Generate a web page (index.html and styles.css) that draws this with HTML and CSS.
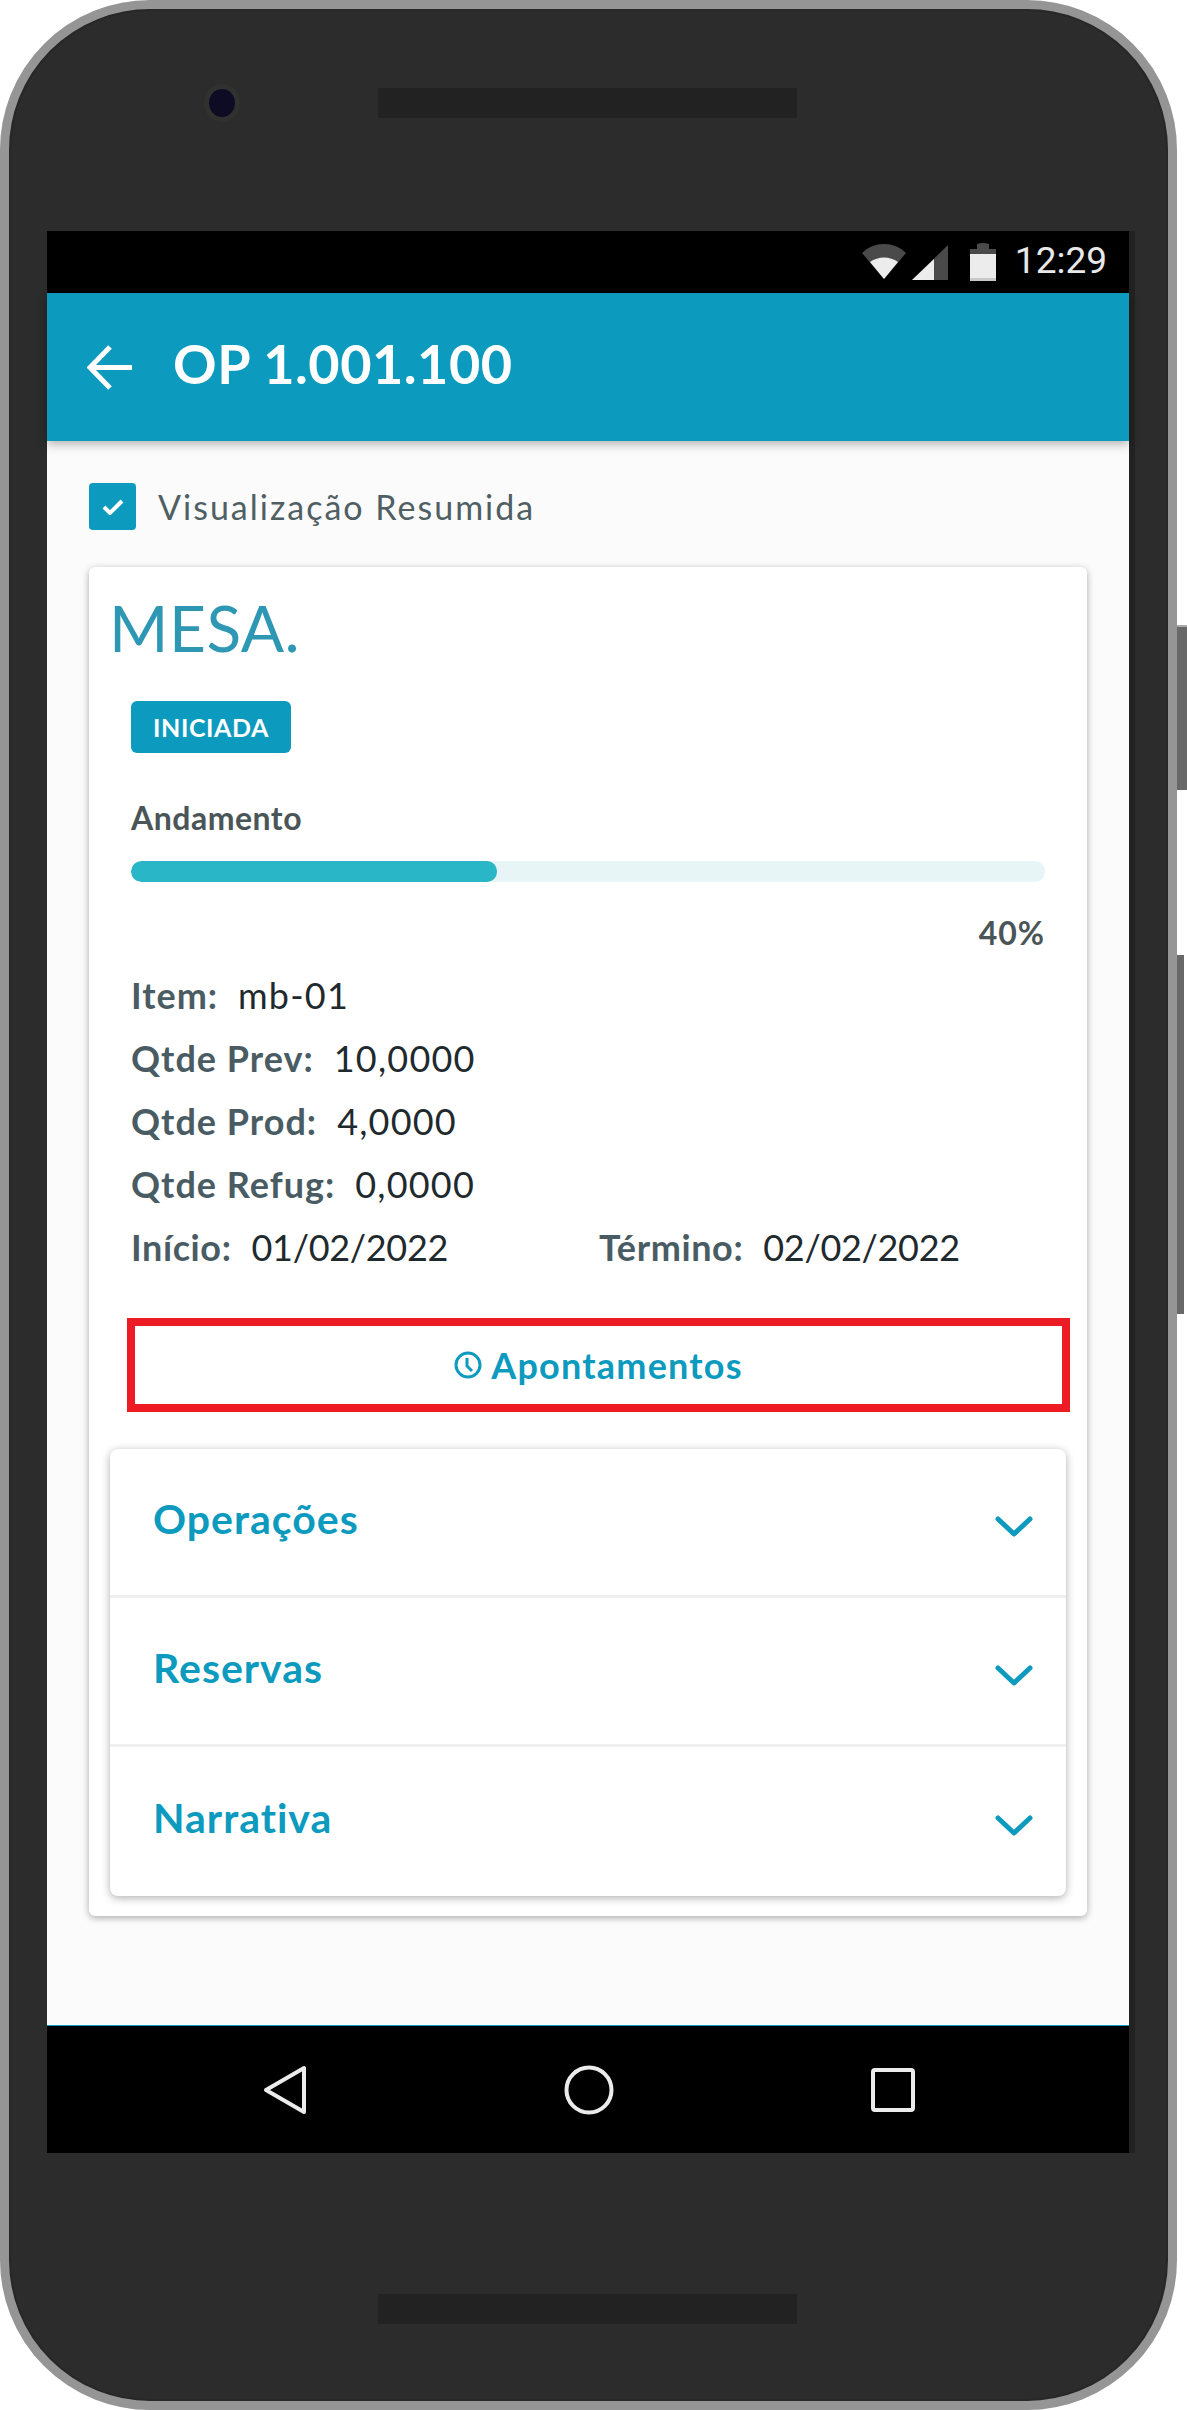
FILE: index.html
```html
<!DOCTYPE html>
<html lang="pt-BR">
<head>
    <meta charset="UTF-8">
    <title>OP 1.001.100</title>
    <link rel="stylesheet" href="styles.css">
</head>
<body>
    <div class="phone">
        <div class="side-key side-key-power"></div>
        <div class="side-key side-key-volume"></div>

        <div class="phone-top">
            <div class="camera"></div>
            <div class="speaker"></div>
        </div>

        <div class="screen">
            <div class="status-bar">
                <svg class="status-wifi" width="44" height="35" viewBox="0 0 44 35">
                    <path d="M0 9 C12 -3 32 -3 44 9 L22 35 Z" fill="#4a4a4a"/>
                    <path d="M8 18 C16 12 28 12 36 18 L22 35 Z" fill="#ececec"/>
                </svg>
                <svg class="status-signal" width="36" height="35" viewBox="0 0 36 35">
                    <path d="M36 0 L36 35 L0 35 Z" fill="#4a4a4a"/>
                    <path d="M22 14 L22 35 L0 35 Z" fill="#ececec"/>
                </svg>
                <svg class="status-battery" width="26" height="38" viewBox="0 0 26 38">
                    <path d="M0 6 L7 6 L7 1 Q13 -1 19 1 L19 6 L26 6 L26 38 L0 38 Z" fill="#4a4a4a"/>
                    <rect x="0" y="11" width="26" height="24" fill="#ececec"/>
                    <rect x="0" y="35" width="26" height="3" fill="#c8c8c8"/>
                </svg>
                <span class="status-time">12:29</span>
            </div>

            <div class="app-bar">
                <svg class="back-arrow" width="45" height="45" viewBox="0 0 45 45">
                    <path d="M45 22.5 H4 M23 2 L3 22.5 L23 43" fill="none" stroke="#fff" stroke-width="5"/>
                </svg>
                <h1 class="app-title">OP 1.001.100</h1>
            </div>

            <div class="content">
                <div class="summary-check">
                    <span class="check-box">
                        <svg width="22" height="16" viewBox="0 0 22 16">
                            <path d="M2 8 L8 14 L20 2" fill="none" stroke="#fff" stroke-width="4"/>
                        </svg>
                    </span>
                    <span class="check-label">Visualização Resumida</span>
                </div>

                <div class="card">
                    <h2 class="card-title">MESA.</h2>
                    <div class="details">
                        <span class="badge">INICIADA</span>
                        <div class="progress-label">Andamento</div>
                        <div class="progress-track">
                            <div class="progress-fill" style="width: 40%"></div>
                        </div>
                        <div class="progress-value">40%</div>

                        <div class="info-list">
                            <div class="info-row"><b>Item:</b><span>mb-01</span></div>
                            <div class="info-row"><b>Qtde Prev:</b><span>10,0000</span></div>
                            <div class="info-row"><b>Qtde Prod:</b><span>4,0000</span></div>
                            <div class="info-row"><b>Qtde Refug:</b><span>0,0000</span></div>
                            <div class="info-row info-dates">
                                <div class="date-col"><b>Início:</b><span>01/02/2022</span></div>
                                <div class="date-col"><b>Término:</b><span>02/02/2022</span></div>
                            </div>
                        </div>
                    </div>

                    <button class="report-button">
                        <svg width="28" height="28" viewBox="0 0 28 28">
                            <circle cx="14" cy="14" r="12" fill="none" stroke="#0c9abe" stroke-width="3"/>
                            <path d="M13 7 V15 L18 20" fill="none" stroke="#0c9abe" stroke-width="3"/>
                        </svg>
                        Apontamentos
                    </button>

                    <div class="accordion">
                        <div class="accordion-row">
                            <span>Operações</span>
                            <svg class="chevron" width="38" height="21" viewBox="0 0 38 21">
                                <path d="M3 3 L19 18 L35 3" fill="none" stroke="#0c9abe" stroke-width="5" stroke-linecap="round" stroke-linejoin="round"/>
                            </svg>
                        </div>
                        <div class="accordion-row">
                            <span>Reservas</span>
                            <svg class="chevron" width="38" height="21" viewBox="0 0 38 21">
                                <path d="M3 3 L19 18 L35 3" fill="none" stroke="#0c9abe" stroke-width="5" stroke-linecap="round" stroke-linejoin="round"/>
                            </svg>
                        </div>
                        <div class="accordion-row">
                            <span>Narrativa</span>
                            <svg class="chevron" width="38" height="21" viewBox="0 0 38 21">
                                <path d="M3 3 L19 18 L35 3" fill="none" stroke="#0c9abe" stroke-width="5" stroke-linecap="round" stroke-linejoin="round"/>
                            </svg>
                        </div>
                    </div>
                </div>
            </div>

            <div class="nav-bar">
                <svg width="44" height="50" viewBox="0 0 44 50">
                    <path d="M41 3 V47 L3 25 Z" fill="none" stroke="#ececec" stroke-width="4" stroke-linejoin="round"/>
                </svg>
                <svg width="50" height="50" viewBox="0 0 50 50">
                    <circle cx="25" cy="25" r="22.5" fill="none" stroke="#ececec" stroke-width="4"/>
                </svg>
                <svg width="44" height="44" viewBox="0 0 44 44">
                    <rect x="2" y="2" width="40" height="40" rx="2" fill="none" stroke="#ececec" stroke-width="4"/>
                </svg>
            </div>
        </div>

        <div class="phone-bottom">
            <div class="speaker"></div>
        </div>
    </div>
</body>
</html>
```

FILE: styles.css
```css
* {
    box-sizing: border-box;
}

body {
    margin: 0;
    width: 1187px;
    height: 2410px;
    background: #fff;
    font-family: 'Lato', 'Open Sans', sans-serif;
    overflow: hidden;
}

.phone {
    position: relative;
    width: 1177px;
    height: 2410px;
    background: #2c2c2c;
    border: 9px solid #959595;
    border-radius: 150px;
    display: flex;
    flex-direction: column;
    box-shadow: inset 0 0 0 2px #272727;
}

.side-key {
    position: absolute;
    background: #686868;
}

.side-key-power {
    left: 1168px;
    top: 616px;
    width: 10px;
    height: 165px;
    border-top: 2px solid #aaa;
}

.side-key-volume {
    left: 1168px;
    top: 946px;
    width: 7px;
    height: 359px;
}

/* top of the device, camera and speaker */
.phone-top {
    height: 222px;
    padding: 79px 0 0 200px;
    display: flex;
    align-items: flex-start;
}

.camera {
    width: 26px;
    height: 28px;
    margin: 1px 143px 0 0;
    border-radius: 50%;
    background: #0d0c24;
    box-shadow: 0 0 0 5px #313130;
}

.speaker {
    width: 419px;
    height: 30px;
    background: #222;
}

.screen {
    width: 1082px;
    height: 1922px;
    margin-left: 38px;
    display: flex;
    flex-direction: column;
    box-shadow: 6px 0 0 #222;
}

.status-bar {
    height: 62px;
    background: #000;
    padding: 11px 22px 0 0;
    display: flex;
    align-items: flex-start;
    justify-content: flex-end;
}

.status-wifi {
    margin: 2px 6px 0 0;
}

.status-signal {
    margin: 3px 22px 0 0;
}

.status-battery {
    margin: 1px 19px 0 0;
}

.status-time {
    font-family: 'Roboto', sans-serif;
    font-size: 37px;
    line-height: 38px;
    color: #e8e8e8;
}

.app-bar {
    height: 148px;
    background: #0c9abe;
    padding-left: 40px;
    display: flex;
    align-items: center;
    box-shadow: 0 3px 10px rgba(0, 0, 0, 0.3);
    z-index: 1;
}

.app-title {
    margin: -7px 0 0 41px;
    font-size: 54px;
    font-weight: 700;
    letter-spacing: 0.5px;
    color: #fff;
}

.content {
    flex-grow: 1;
    background: #fbfbfb;
    border-bottom: 1px solid #0c9abe;
    padding: 42px 42px 0;
}

.summary-check {
    display: flex;
    align-items: center;
}

.check-box {
    width: 47px;
    height: 47px;
    background: #0c9abe;
    border-radius: 4px;
    display: flex;
    align-items: center;
    justify-content: center;
}

.check-label {
    margin-left: 22px;
    font-size: 34px;
    color: #4f5f63;
    letter-spacing: 2px;
}

.card {
    margin-top: 37px;
    height: 1349px;
    background: #fff;
    border-radius: 6px;
    box-shadow: 0 2px 7px rgba(0, 0, 0, 0.32);
    padding-top: 1px;
}

.card-title {
    margin: 23px 0 0 20px;
    font-size: 64px;
    line-height: 74px;
    font-weight: 400;
    letter-spacing: 0.5px;
    color: #2e97b3;
}

.details {
    padding: 0 42px;
}

.badge {
    display: inline-block;
    margin-top: 36px;
    height: 52px;
    padding: 0 22px;
    line-height: 52px;
    background: #0c9abe;
    border-radius: 6px;
    color: #fff;
    font-size: 25px;
    font-weight: 700;
    letter-spacing: 0.6px;
}

.progress-label {
    margin-top: 45px;
    font-size: 32px;
    line-height: 40px;
    font-weight: 700;
    letter-spacing: 0.5px;
    color: #4a5558;
}

.progress-track {
    margin-top: 23px;
    height: 21px;
    background: #e8f5f6;
    border-radius: 10px;
    overflow: hidden;
}

.progress-fill {
    height: 100%;
    background: #29b6c6;
    border-radius: 10px;
}

.progress-value {
    margin-top: 31px;
    text-align: right;
    font-size: 32px;
    line-height: 40px;
    font-weight: 700;
    letter-spacing: 1px;
    color: #4a5558;
}

.info-list {
    margin-top: 10px;
}

.info-row {
    height: 63px;
    display: flex;
    align-items: center;
    font-size: 36px;
    letter-spacing: 1.2px;
    color: #1f2a2e;
}

.info-row b {
    margin-right: 20px;
    font-weight: 700;
    letter-spacing: 1px;
    color: #4a5c63;
}

.info-dates {
    display: grid;
    grid-template-columns: 468px 1fr;
}

.date-col {
    display: flex;
    align-items: center;
    letter-spacing: -0.3px;
}

.info-dates b {
    letter-spacing: 0.6px;
}

.report-button {
    display: flex;
    align-items: center;
    justify-content: center;
    gap: 9px;
    width: 943px;
    height: 94px;
    margin: 40px 0 0 38px;
    background: #fff;
    border: 8px solid #ed1c24;
    color: #0c9abe;
    font-family: inherit;
    font-size: 36px;
    font-weight: 700;
    letter-spacing: 1.2px;
}

.accordion {
    margin: 37px 21px 0;
    background: #fff;
    border-radius: 8px;
    box-shadow: 0 2px 8px rgba(0, 0, 0, 0.32);
}

.accordion-row {
    height: 149px;
    padding: 0 33px 8px 43px;
    border-bottom: 3px solid #f0f0f0;
    display: flex;
    align-items: center;
    justify-content: space-between;
    font-size: 41px;
    font-weight: 700;
    letter-spacing: 1px;
    color: #0c9abe;
}

.accordion-row:last-child {
    border-bottom: none;
}

.chevron {
    margin-top: 16px;
}

.nav-bar {
    height: 127px;
    background: #000;
    position: relative;
    display: flex;
    align-items: center;
    justify-content: space-between;
    padding: 0 214px 0 216px;
}

.phone-bottom {
    padding: 141px 0 0 369px;
}
```
